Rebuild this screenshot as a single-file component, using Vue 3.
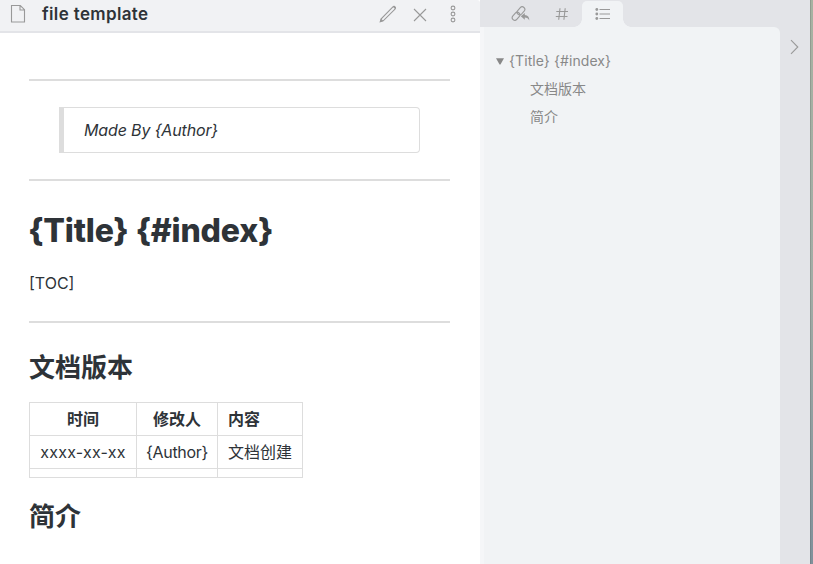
<script setup>
const outline = ['文档版本', '简介']
const head = ['时间', '修改人', '内容']
const rows = [
  ['xxxx-xx-xx', '{Author}', '文档创建'],
  ['', '', ''],
]
</script>

<template>
  <div class="app">
    <section class="note">
      <header class="note-head">
        <svg class="doc" width="16" height="19" viewBox="0 0 16 19">
          <path d="M1.5 1.5H10.3L14.5 5.7V18H1.5ZM10 1.5V6H14.5" />
        </svg>
        <div class="name">file template</div>
        <svg class="act pencil" width="18" height="18" viewBox="0 0 18 18">
          <path d="M1.3 16.7L2.2 13.8L13.9 2Q14.9 .8 16 1.9Q17.1 3 16 4.1L4.2 15.8Z" />
          <path class="solid" d="M.8 17.2L1.9 13.6L4.4 16.1ZM13.8 1.8L15.2 .8L17.1 2.7L16.1 4.1Z" />
        </svg>
        <svg class="act close" width="14" height="14" viewBox="0 0 14 14">
          <path d="M1 1L13 13M13 1L1 13" />
        </svg>
        <svg class="act more" width="8" height="18" viewBox="0 0 8 18">
          <circle cx="4" cy="3" r="1.9" />
          <circle cx="4" cy="9" r="1.9" />
          <circle cx="4" cy="15" r="1.9" />
        </svg>
      </header>
      <article class="body">
        <hr />
        <blockquote>Made By {Author}</blockquote>
        <hr />
        <h1>{Title} {#index}</h1>
        <p>[TOC]</p>
        <hr />
        <h2>文档版本</h2>
        <table>
          <colgroup><col class="date" /><col class="author" /><col class="content" /></colgroup>
          <thead>
            <tr><th v-for="h in head" :key="h">{{ h }}</th></tr>
          </thead>
          <tbody>
            <tr v-for="(r, i) in rows" :key="i">
              <td v-for="(c, j) in r" :key="j">{{ c }}</td>
            </tr>
          </tbody>
        </table>
        <h2 class="intro">简介</h2>
      </article>
    </section>

    <aside class="side">
      <nav class="tabs">
        <div class="tab">
          <svg width="20" height="18" viewBox="0 0 20 18">
            <g transform="rotate(-48 8 8)">
              <rect x="-.8" y="5.4" width="8.8" height="5.2" rx="2.6" />
              <rect x="6.4" y="5.4" width="9" height="5.2" rx="2.6" />
            </g>
            <path class="solid" d="M9.8 11.2L13.8 7.9V10Q18.4 10.2 18.3 15.6Q17 12.7 13.8 12.6V14.7Z" />
          </svg>
        </div>
        <div class="tab">
          <svg width="14" height="14" viewBox="0 0 14 14">
            <path d="M5 1.3L3.7 12.7M10.2 1.3L8.9 12.7M1.3 4.5H13M.8 9.5H12.5" />
          </svg>
        </div>
        <div class="tab active">
          <svg width="16" height="14" viewBox="0 0 16 14">
            <path d="M4.5 2.5H15M4.5 7H15M4.5 11.5H15" />
            <circle class="solid" cx="1.8" cy="2.5" r="1.4" />
            <circle class="solid" cx="1.8" cy="7" r="1.4" />
            <circle class="solid" cx="1.8" cy="11.5" r="1.4" />
          </svg>
        </div>
      </nav>
      <div class="outline">
        <div class="root">
          <svg width="8" height="7" viewBox="0 0 8 7"><path d="M0 .2H8L4.5 6.6H3.5Z" /></svg>
          <span>{Title} {#index}</span>
        </div>
        <div v-for="o in outline" :key="o" class="child">{{ o }}</div>
      </div>
    </aside>

    <div class="ribbon">
      <svg width="9" height="16" viewBox="0 0 9 16"><path d="M1 1.2L7.8 8L1 14.8" /></svg>
    </div>
    <div class="edge"></div>
  </div>
</template>

<style>
body {
  margin: 0;
  overflow: hidden;
}
</style>

<style scoped>
.app {
  display: flex;
  width: 813px;
  height: 564px;
  background: #e3e4e8;
  color: #2e3338;
  font-family: Inter, "Noto Sans CJK SC", sans-serif;
  font-size: 16px;
}
svg {
  flex: none;
  fill: none;
  stroke: #999;
  stroke-width: 1.1;
}
.solid {
  fill: #999;
  stroke: none;
}
.note {
  width: 480px;
  flex: none;
  background: #fff;
  overflow: hidden;
}
.note-head {
  display: flex;
  align-items: center;
  box-sizing: border-box;
  height: 33px;
  padding: 0 23px 3px 10px;
  background: #f1f2f4;
  border-bottom: 2px solid #e3e4e8;
  border-top-right-radius: 3px;
}
.doc {
  margin-top: -1px;
}
.name {
  flex: 1;
  padding-left: 16px;
  font-size: 17px;
  font-weight: 600;
  letter-spacing: 0.35px;
  line-height: 27px;
}
.close {
  margin: 2px 14px 0 16px;
}
.more {
  margin-left: 8px;
}
.body {
  padding: 46px 30px 0 29px;
}
hr {
  height: 2px;
  margin: 0;
  border: 0;
  background: #ddd;
}
blockquote {
  box-sizing: border-box;
  height: 46px;
  margin: 26px 30px;
  padding-left: 20px;
  border: 1px solid #ddd;
  border-left-width: 5px;
  border-radius: 0 4px 4px 0;
  font-style: italic;
  letter-spacing: -0.14px;
  line-height: 44px;
}
h1 {
  margin: 30px 0 0 -1px;
  font-size: 32px;
  font-weight: 800;
  letter-spacing: -0.2px;
  line-height: 40px;
}
p {
  margin: 20px 0 26px;
  line-height: 24px;
}
h2 {
  margin: 25px 0 15px;
  font-size: 26px;
  font-weight: 700;
  line-height: 39px;
}
table {
  width: 274px;
  table-layout: fixed;
  border-collapse: collapse;
}
.date {
  width: 107px;
}
.author {
  width: 81px;
}
.content {
  width: 85px;
}
th,
td {
  height: 24px;
  padding: 4px 10px;
  border: 1px solid #ddd;
  line-height: 24px;
  text-align: center;
  white-space: nowrap;
}
td:first-child {
  letter-spacing: 0.22px;
}
td:nth-child(2) {
  padding: 4px 9px;
  letter-spacing: -0.3px;
}
th:last-child,
td:last-child {
  text-align: left;
}
tbody tr:last-child td {
  height: 0;
}
.intro {
  margin-top: 19px;
}
.side {
  width: 300px;
  flex: none;
}
.tabs {
  display: flex;
  box-sizing: border-box;
  height: 27px;
  padding: 1px 0 0 20px;
}
.tab {
  position: relative;
  display: flex;
  align-items: center;
  justify-content: center;
  width: 41px;
}
.active {
  background: #f1f3f5;
  border-radius: 5px 5px 0 0;
}
.active::before,
.active::after {
  content: "";
  position: absolute;
  bottom: 0;
  width: 8px;
  height: 8px;
}
.active::before {
  right: 100%;
  background: radial-gradient(circle at 0 0, transparent 7.5px, #f1f3f5 8px);
}
.active::after {
  left: 100%;
  background: radial-gradient(circle at 100% 0, transparent 7.5px, #f1f3f5 8px);
}
.outline {
  box-sizing: border-box;
  height: 537px;
  padding: 20px 0 0 12px;
  background: #f1f3f5;
  border-left: 4px solid #f5f6f8;
  border-top-right-radius: 6px;
  color: #888;
  font-size: 14px;
  line-height: 28px;
}
.root {
  display: flex;
  align-items: center;
  gap: 5px;
  letter-spacing: 0.08px;
}
.root svg {
  fill: #888;
  stroke: none;
}
.child {
  padding-left: 34px;
}
.ribbon {
  flex: 1;
  padding: 39px 0 0 10px;
}
.edge {
  width: 3px;
  background: linear-gradient(#a8b2a2, #a3ada6 50%, #80919b);
  box-shadow: inset 1px 0 rgba(80, 90, 90, 0.25);
}
</style>
